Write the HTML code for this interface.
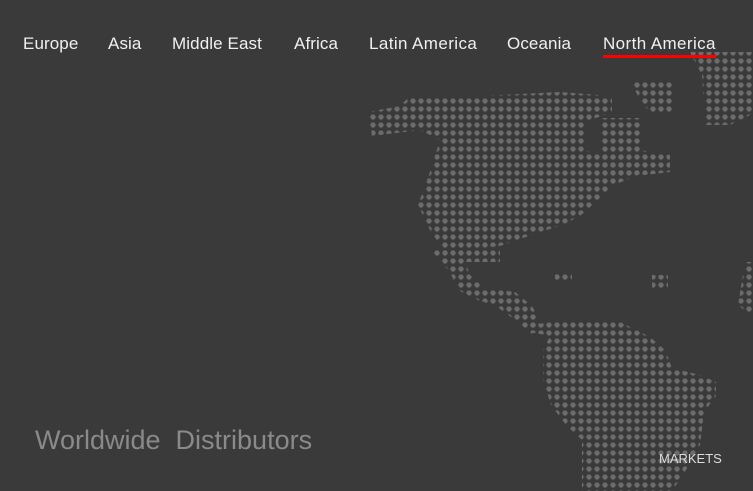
<!DOCTYPE html>
<html><head><style>
html,body{margin:0;padding:0}
body{width:753px;height:491px;background:#3a3a3a;position:relative;overflow:hidden;font-family:"Liberation Sans",sans-serif}
.nav{position:absolute;top:34px;font-size:17px;color:#f0f0f0;letter-spacing:0.1px}
.m{position:absolute;left:0;top:0;width:753px;height:491px;background-image:radial-gradient(circle at 4px 4px,#6c6c6c 2.3px,rgba(108,108,108,0) 2.9px);background-size:8px 8px;background-position:1px 1px}
</style></head><body>
<div class="m" style="clip-path:polygon(410px 96px,480px 96px,560px 92px,612px 96px,612px 112px,585px 122px,585px 150px,600px 155px,632px 158px,640px 174px,612px 186px,598px 200px,580px 216px,560px 226px,540px 232px,500px 246px,445px 252px,430px 230px,418px 205px,428px 178px,440px 140px,420px 130px,372px 136px,368px 112px,400px 106px)"></div>
<div class="m" style="clip-path:polygon(600px 118px,640px 118px,640px 150px,670px 155px,670px 172px,645px 175px,600px 170px)"></div>
<div class="m" style="clip-path:polygon(630px 80px,672px 80px,672px 112px,650px 112px,640px 100px)"></div>
<div class="m" style="clip-path:polygon(428px 248px,500px 248px,500px 262px,465px 262px,470px 275px,484px 288px,515px 292px,532px 306px,540px 322px,532px 334px,518px 322px,496px 306px,478px 300px,458px 290px,450px 272px,438px 258px)"></div>
<div class="m" style="clip-path:polygon(560px 321px,618px 321px,650px 337px,665px 350px,672px 368px,700px 375px,716px 382px,716px 396px,704px 412px,700px 445px,686px 470px,672px 491px,582px 491px,582px 440px,566px 425px,551px 405px,543px 380px,543px 350px,550px 336px,530px 332px,530px 325px)"></div>
<div class="m" style="clip-path:polygon(690px 52px,760px 52px,760px 110px,730px 125px,705px 125px,702px 75px)"></div>
<div class="m" style="clip-path:polygon(745px 262px,760px 262px,760px 322px,738px 305px)"></div>
<div class="m" style="clip-path:polygon(555px 272px,572px 272px,572px 282px,555px 282px)"></div>
<div class="m" style="clip-path:polygon(652px 275px,668px 275px,668px 290px,652px 290px)"></div>
<div class="nav" style="left:23px">Europe</div>
<div class="nav" style="left:108px">Asia</div>
<div class="nav" style="left:172px">Middle East</div>
<div class="nav" style="left:294px">Africa</div>
<div class="nav" style="left:369px;letter-spacing:0.4px">Latin America</div>
<div class="nav" style="left:507px">Oceania</div>
<div class="nav" style="left:603px;letter-spacing:0.4px">North America</div>
<div style="position:absolute;left:603px;top:55px;width:113px;height:3px;background:#f00"></div>
<div style="position:absolute;left:35px;top:425px;font-size:27px;color:#8a8a8a;white-space:pre;letter-spacing:0px">Worldwide  Distributors</div>
<div style="position:absolute;left:659px;top:451px;font-size:13px;color:#ddd">MARKETS</div>
</body></html>
